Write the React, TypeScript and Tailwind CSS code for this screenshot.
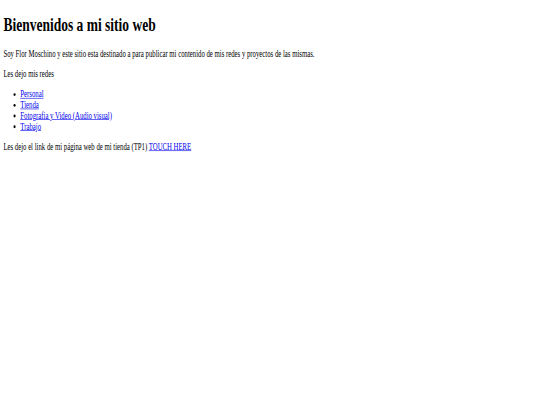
export default function App() {
  const redes = ["Personal", "Tienda", "Fotografia y Video (Audio visual)", "Trabajo"];

  return (
    <div className="min-h-[405px] overflow-hidden bg-white">
      <div className="w-[1280px] origin-top-left scale-x-[0.422] scale-y-[0.597] px-2 pt-[23px] font-['Liberation_Serif',serif] text-[16px] leading-[normal] text-black">
        <h1 className="mb-[21.44px] text-[32px] font-bold">Bienvenidos a mi sitio web</h1>
        <p className="my-4">
          Soy Flor Moschino y este sitio esta destinado a para publicar mi contenido de mis redes y proyectos de las mismas.
        </p>
        <p className="my-4">Les dejo mis redes</p>
        <ul className="my-4 list-disc pl-10">
          {redes.map((red) => (
            <li key={red}>
              <a className="text-[#0000EE] underline" href="#">
                {red}
              </a>
            </li>
          ))}
        </ul>
        <p className="my-4">
          Les dejo el link de mi página web de mi tienda (TP1){" "}
          <a className="text-[#0000EE] underline" href="#">
            TOUCH HERE
          </a>
        </p>
      </div>
    </div>
  );
}
